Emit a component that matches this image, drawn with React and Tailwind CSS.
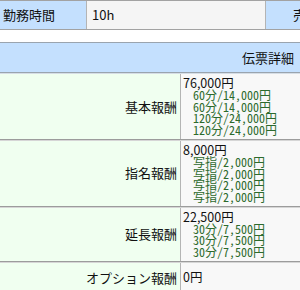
import React from 'react';

const rows = [
  { label: '基本報酬', total: '76,000円', items: ['60分/14,000円', '60分/14,000円', '120分/24,000円', '120分/24,000円'] },
  { label: '指名報酬', total: '8,000円', items: ['写指/2,000円', '写指/2,000円', '写指/2,000円', '写指/2,000円'] },
  { label: '延長報酬', total: '22,500円', items: ['30分/7,500円', '30分/7,500円', '30分/7,500円'] },
];

function FeeRow({ label, total, items }) {
  return (
    <div className="flex border-b border-[#9c9c9c] shadow-[0_1px_0_#d6d6d6] mb-[1px]">
      <div className="w-[181px] shrink-0 flex items-center justify-end pr-[3px] bg-[#f0fff0] border-r border-[#b4b4b4]">
        {label}
      </div>
      <div className="flex-1 bg-[#f8f8f8] pl-[2px] pt-[2px] pb-[3px]">
        <div className="leading-[13px] text-[12.5px]">{total}</div>
        {items.map((t, i) => (
          <div
            key={i}
            className="pl-[10px] text-[12px] leading-[11.7px] text-[#2c6a2c] [font-feature-settings:'hwid']"
          >
            {t}
          </div>
        ))}
      </div>
    </div>
  );
}

export default function App() {
  return (
    <div className="w-[300px] h-[290px] overflow-hidden bg-white text-[13px] text-[#111] font-['Noto_Sans_CJK_JP',sans-serif]">
      {/* top summary row */}
      <div className="flex h-[30px] border-y border-[#a2a2a2] whitespace-nowrap">
        <div className="w-[87px] shrink-0 flex items-center pl-[3px] bg-[#c4e0fe] border-r border-[#b4b4b4]">
          勤務時間
        </div>
        <div className="w-[179px] shrink-0 flex items-center pl-[5px] bg-[#f5f5f5] border-r border-[#b4b4b4]">
          10h
        </div>
        <div className="flex-1 overflow-hidden flex items-center pl-[27px] bg-[#c4e0fe]">
          売上金額
        </div>
      </div>

      <div className="h-[12px]" />

      {/* detail table */}
      <div className="border-t border-[#9aa4ae] shadow-[inset_0_1px_0_#d8e4f0]">
        <div className="h-[30px] flex items-center justify-end pr-[6px] pt-[1px] bg-[#c4e0fe] border-b border-[#9aa4ae] shadow-[0_1px_0_#d6dee6] mb-[1px]">
          伝票詳細
        </div>
        {rows.map((r) => (
          <FeeRow key={r.label} {...r} />
        ))}
        <div className="flex h-[30px]">
          <div className="w-[181px] shrink-0 flex items-center justify-end pr-[3px] bg-[#f0fff0] border-r border-[#b4b4b4]">
            オプション報酬
          </div>
          <div className="flex-1 flex items-center bg-[#f8f8f8] pl-[2px] text-[12.5px]">0円</div>
        </div>
      </div>
    </div>
  );
}
